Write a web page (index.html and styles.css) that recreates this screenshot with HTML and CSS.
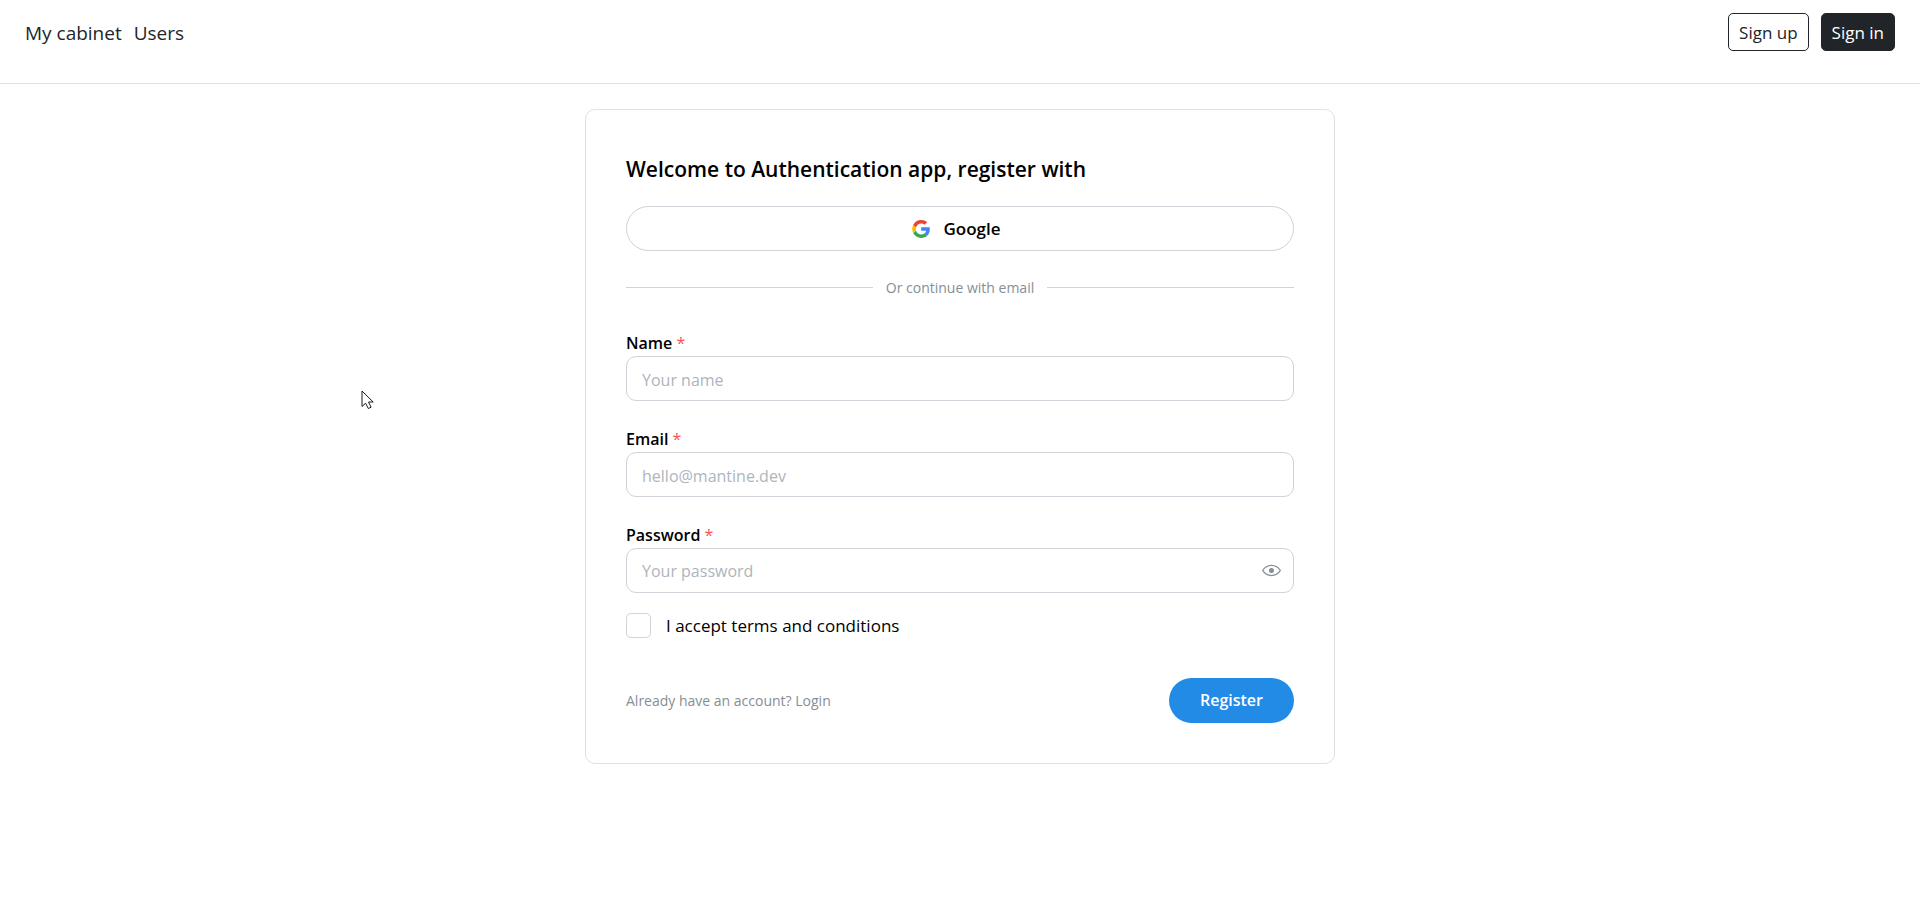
FILE: index.html
```html
<!DOCTYPE html>
<html lang="en">
<head>
<meta charset="utf-8">
<meta name="viewport" content="width=device-width, initial-scale=1">
<title>Authentication app</title>
<link rel="stylesheet" href="styles.css">
</head>
<body>
<header class="header">
  <nav class="nav">
    <a class="nav-link" href="#cabinet">My cabinet</a>
    <a class="nav-link" href="#users">Users</a>
  </nav>
  <div class="actions">
    <button class="btn btn-outline" type="button">Sign up</button>
    <button class="btn btn-dark" type="button">Sign in</button>
  </div>
</header>
<main class="main">
  <section class="card">
    <h1 class="title">Welcome to Authentication app, register with</h1>
    <button class="google" type="button">
      <svg class="google-icon" viewBox="0 0 256 262" aria-hidden="true">
        <path fill="#4285F4" d="M255.878 133.451c0-10.734-.871-18.567-2.756-26.69H130.55v48.448h71.947c-1.45 12.04-9.283 30.172-26.69 42.356l-.244 1.622 38.755 30.023 2.685.268c24.659-22.774 38.875-56.282 38.875-96.027"/>
        <path fill="#34A853" d="M130.55 261.1c35.248 0 64.839-11.605 86.453-31.622l-41.196-31.913c-11.024 7.688-25.82 13.055-45.257 13.055-34.523 0-63.824-22.773-74.269-54.25l-1.531.13-40.298 31.187-.527 1.465C35.393 231.798 79.49 261.1 130.55 261.1"/>
        <path fill="#FBBC05" d="M56.281 156.37c-2.756-8.123-4.351-16.827-4.351-25.82 0-8.994 1.595-17.697 4.206-25.82l-.073-1.73L15.26 71.312l-1.335.635C5.077 89.644 0 109.517 0 130.55s5.077 40.905 13.925 58.602l42.356-32.782"/>
        <path fill="#EB4335" d="M130.55 50.479c24.514 0 41.05 10.589 50.479 19.438l36.844-35.974C195.245 12.91 165.798 0 130.55 0 79.49 0 35.393 29.301 13.925 71.947l42.211 32.783c10.59-31.477 39.891-54.251 74.414-54.251"/>
      </svg>
      Google
    </button>
    <div class="divider">Or continue with email</div>
    <form class="form">
      <div class="fields">
        <div class="field">
          <label class="label" for="name">Name <span class="star">*</span></label>
          <input class="input" id="name" type="text" placeholder="Your name">
        </div>
        <div class="field">
          <label class="label" for="email">Email <span class="star">*</span></label>
          <input class="input" id="email" type="email" placeholder="hello@mantine.dev">
        </div>
        <div class="field">
          <label class="label" for="password">Password <span class="star">*</span></label>
          <div class="input password">
            <input class="password-input" id="password" type="password" placeholder="Your password">
            <button class="eye" type="button" aria-label="Show password">
              <svg class="eye-icon" viewBox="0 0 15 15" aria-hidden="true">
                <path fill="currentColor" fill-rule="evenodd" d="M7.5 11C4.8 11 2.53 9.62 1.1 7.5 2.53 5.38 4.8 4 7.5 4s4.97 1.38 6.4 3.5C12.47 9.62 10.2 11 7.5 11Zm0-8C4.31 3 1.65 4.71.08 7.24a.5.5 0 0 0 0 .52C1.65 10.29 4.31 12 7.5 12s5.85-1.71 7.42-4.24a.5.5 0 0 0 0-.52C13.35 4.71 10.69 3 7.5 3Zm0 6.5a2 2 0 1 0 0-4 2 2 0 0 0 0 4Z"/>
              </svg>
            </button>
          </div>
        </div>
      </div>
      <div class="terms">
        <input class="checkbox" id="terms" type="checkbox">
        <label class="terms-label" for="terms">I accept terms and conditions</label>
      </div>
      <div class="footer">
        <a class="login" href="#login">Already have an account? Login</a>
        <button class="register" type="submit">Register</button>
      </div>
    </form>
  </section>
</main>
<svg class="pointer" viewBox="0 0 13 20" aria-hidden="true">
  <path d="M1 1v15.500l3.600-3.300 2.700 5.300 2.800-1.300-2.600-5.200h4.700z" fill="#fff" stroke="#1a1626" stroke-width="1"/>
</svg>
</body>
</html>
```
FILE: styles.css
```css
* {
  box-sizing: border-box;
}

body {
  margin: 0;
  background: #fff;
  color: #000;
  font-family: "Open Sans", "Noto Sans", sans-serif;
  font-size: 17px;
  line-height: 27px;
}

button,
input {
  font: inherit;
}

a {
  text-decoration: none;
}

.header {
  display: flex;
  justify-content: space-between;
  align-items: flex-start;
  padding: 13px 25px 32px;
  border-bottom: 1px solid #dee2e6;
}

.nav {
  display: flex;
  gap: 12px;
  padding-top: 7px;
}

.nav-link {
  color: #212529;
  font-size: 19px;
}

.actions {
  display: flex;
  gap: 12px;
}

.btn {
  height: 38px;
  padding: 0 10px;
  border: 1px solid #212529;
  border-radius: 5px;
}

.btn-outline {
  background: #fff;
  color: #212529;
}

.btn-dark {
  background: #212529;
  color: #fff;
}

.main {
  padding: 25px;
}

.card {
  display: flex;
  flex-direction: column;
  max-width: 750px;
  margin: 0 auto;
  padding: 40px;
  border: 1px solid #dee2e6;
  border-radius: 10px;
}

.title {
  margin: 0 0 20px;
  padding-top: 2px;
  font-size: 21px;
  font-weight: 600;
  line-height: 34px;
}

.google {
  display: flex;
  justify-content: center;
  align-items: center;
  gap: 13px;
  height: 45px;
  padding: 0 22px 0 15px;
  border: 1px solid #ced4da;
  border-radius: 23px;
  background: #fff;
  color: #000;
  font-size: 17px;
  font-weight: 600;
}

.google-icon {
  width: 18px;
  height: 18px;
}

.divider {
  display: flex;
  align-items: center;
  gap: 13px;
  margin: 25px 0 30px;
  color: #868e96;
  font-size: 14px;
  line-height: 23px;
}

.divider::before,
.divider::after {
  content: "";
  flex: 1;
  border-top: 1px solid #ced4da;
}

.fields {
  display: flex;
  flex-direction: column;
  gap: 24px;
}

.field {
  display: flex;
  flex-direction: column;
}

.label {
  padding-top: 2px;
  font-size: 16px;
  font-weight: 600;
  line-height: 25px;
}

.star {
  color: #fa5252;
  font-weight: 400;
}

.input {
  height: 45px;
  padding: 2px 15px 0;
  border: 1px solid #ced4da;
  border-radius: 10px;
  background: #fff;
  font-size: 16px;
}

.input::placeholder,
.password-input::placeholder {
  color: #adb5bd;
  opacity: 1;
}

.password {
  display: flex;
  align-items: center;
  padding: 0 7px 0 15px;
}

.password-input {
  flex: 1;
  min-width: 0;
  padding: 2px 0 0;
  border: 0;
  background: none;
}

.eye {
  display: flex;
  padding: 5px;
  border: 0;
  background: none;
  color: #868e96;
}

.eye-icon {
  width: 19px;
  height: 19px;
}

.terms {
  display: flex;
  align-items: center;
  gap: 15px;
  margin-top: 20px;
  line-height: 25px;
}

.checkbox {
  appearance: none;
  width: 25px;
  height: 25px;
  margin: 0;
  border: 1px solid #ced4da;
  border-radius: 5px;
  background: #fff;
}

.footer {
  display: flex;
  justify-content: space-between;
  align-items: center;
  margin-top: 40px;
}

.login {
  color: #868e96;
  font-size: 14px;
}

.register {
  height: 45px;
  padding: 0 31px;
  border: 0;
  border-radius: 23px;
  background: #228be6;
  color: #fff;
  font-size: 16px;
  font-weight: 600;
}

.pointer {
  position: absolute;
  left: 361px;
  top: 390px;
  width: 13px;
  height: 20px;
}
```
